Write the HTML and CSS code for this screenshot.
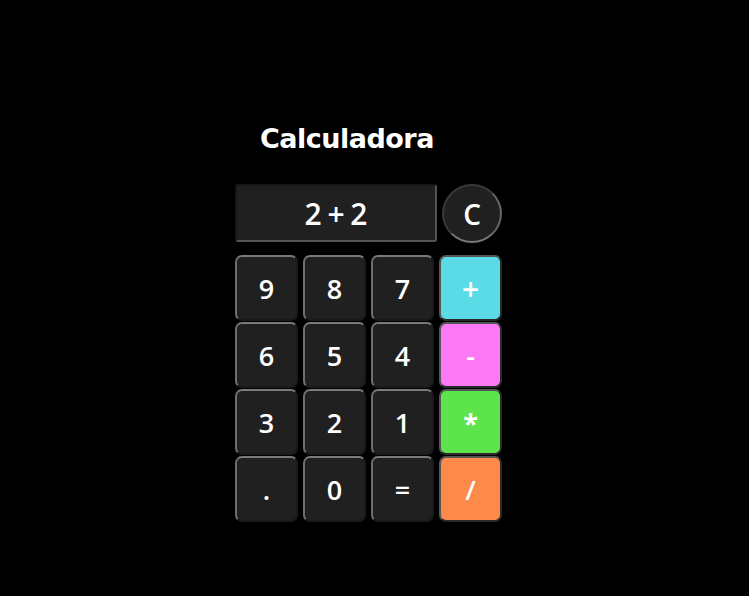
FILE: index.html
```html
<!DOCTYPE html>
<html lang="es">
<head>
<meta charset="utf-8">
<title>Calculadora</title>
<link rel="stylesheet" href="styles.css">
</head>
<body>
<main class="app">
  <h1 class="title">Calculadora</h1>
  <div class="top">
    <div class="display">2 + 2</div>
    <button class="clear">C</button>
  </div>
  <div class="keys">
    <button class="key">9</button>
    <button class="key">8</button>
    <button class="key">7</button>
    <button class="key op plus">+</button>
    <button class="key">6</button>
    <button class="key">5</button>
    <button class="key">4</button>
    <button class="key op minus">-</button>
    <button class="key">3</button>
    <button class="key">2</button>
    <button class="key">1</button>
    <button class="key op times">*</button>
    <button class="key">.</button>
    <button class="key">0</button>
    <button class="key">=</button>
    <button class="key op divide">/</button>
  </div>
</main>
</body>
</html>
```
FILE: styles.css
```css
html, body {
  margin: 0;
  padding: 0;
  background: #000;
  height: 100%;
}

body {
  font-family: "Open Sans", "DejaVu Sans", sans-serif;
  color: #fff;
}

.app {
  width: 267px;
  margin-left: 235px;
  padding-top: 121px;
}

.title {
  margin: 0 0 27px 25px;
  font-family: "DejaVu Sans", sans-serif;
  font-size: 27px;
  line-height: 36px;
  font-weight: 700;
  letter-spacing: -0.5px;
}

.top {
  display: flex;
  gap: 5px;
  height: 58px;
}

.display {
  box-sizing: border-box;
  width: 202px;
  height: 58px;
  background: #212021;
  border: 2px solid;
  border-color: #161616 #555 #555 #161616;
  border-radius: 3px;
  display: flex;
  align-items: center;
  justify-content: center;
  font-size: 30px;
  font-weight: 600;
  word-spacing: -2px;
}

.clear {
  box-sizing: border-box;
  width: 60px;
  height: 59px;
  border-radius: 50%;
  background: #212021;
  border: 2px solid;
  border-color: #3a3a3a #666 #777 #3a3a3a;
  color: #fff;
  font-family: inherit;
  font-weight: 600;
  font-size: 28px;
  padding: 0;
}

.keys {
  margin-top: 13px;
  display: grid;
  grid-template-columns: repeat(4, 63px);
  grid-auto-rows: 66px;
  column-gap: 5px;
  row-gap: 1px;
}

.key {
  box-sizing: border-box;
  background: #212021;
  border: 2px solid;
  border-color: #7a7a7a #1a1a1a #1a1a1a #6e6e6e;
  border-radius: 7px;
  color: #fff;
  font-family: inherit;
  font-size: 27px;
  font-weight: 600;
  padding: 0;
}

.op {
  border-color: #555 #2a2a2a #2a2a2a #555;
}

.plus { background: #5adbe6; font-size: 30px; }
.minus { background: #fb79f4; }
.times { background: #5de34c; font-weight: 700; }
.divide { background: #fd894b; }
```
